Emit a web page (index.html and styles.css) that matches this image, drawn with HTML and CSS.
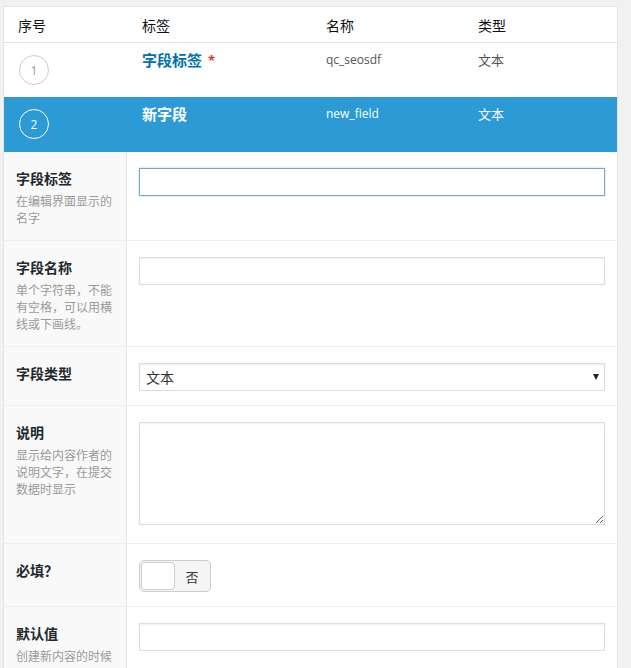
FILE: index.html
```html
<!DOCTYPE html>
<html lang="zh-CN">
<head>
<meta charset="utf-8">
<title>字段</title>
<link rel="stylesheet" href="styles.css">
</head>
<body>
<div class="panel">
  <div class="list-head">
    <div class="cell c-idx">序号</div>
    <div class="cell">标签</div>
    <div class="cell">名称</div>
    <div class="cell">类型</div>
  </div>
  <div class="list-row">
    <div class="cell c-idx"><span class="num">1</span></div>
    <div class="cell c-label"><a class="link" href="#">字段标签</a><span class="req">*</span></div>
    <div class="cell c-name">qc_seosdf</div>
    <div class="cell c-type">文本</div>
  </div>
  <div class="list-row active">
    <div class="cell c-idx"><span class="num">2</span></div>
    <div class="cell c-label"><span class="link">新字段</span></div>
    <div class="cell c-name">new_field</div>
    <div class="cell c-type">文本</div>
  </div>

  <div class="form">
    <div class="frow">
      <div class="flabel"><div class="ltitle">字段标签</div><div class="ldesc">在编辑界面显示的名字</div></div>
      <div class="finput"><input class="text focus" type="text"></div>
    </div>
    <div class="frow">
      <div class="flabel"><div class="ltitle">字段名称</div><div class="ldesc">单个字符串，不能有空格，可以用横线或下画线。</div></div>
      <div class="finput"><input class="text" type="text"></div>
    </div>
    <div class="frow">
      <div class="flabel"><div class="ltitle">字段类型</div></div>
      <div class="finput"><div class="select-wrap"><select class="select"><option>文本</option></select></div></div>
    </div>
    <div class="frow">
      <div class="flabel"><div class="ltitle">说明</div><div class="ldesc">显示给内容作者的说明文字，在提交数据时显示</div></div>
      <div class="finput"><textarea class="textarea"></textarea></div>
    </div>
    <div class="frow">
      <div class="flabel"><div class="ltitle">必填？</div></div>
      <div class="finput"><div class="toggle"><span class="knob"></span><span class="tlabel">否</span></div></div>
    </div>
    <div class="frow">
      <div class="flabel"><div class="ltitle">默认值</div><div class="ldesc">创建新内容的时候显示</div></div>
      <div class="finput"><input class="text" type="text"></div>
    </div>
  </div>
</div>
</body>
</html>
```
FILE: styles.css
```css
* { box-sizing: border-box; }
html, body { margin: 0; padding: 0; }
body {
  background: #f1f1f1;
  font-family: "Open Sans", "Noto Sans CJK SC", sans-serif;
  color: #444;
  font-size: 13px;
}
.panel {
  margin: 6px 0 0 3px;
  width: 615px;
  background: #fff;
  border: 1px solid #e5e5e5;
  border-bottom: 0;
}
.list-head, .list-row {
  display: grid;
  grid-template-columns: 138px 184px 152px 1fr;
}
.list-head {
  height: 36px;
  border-bottom: 1px solid #e1e1e1;
  align-items: center;
  font-size: 14px;
  color: #111;
  font-family: "Noto Sans CJK SC", sans-serif;
}
.list-head .c-idx { padding-left: 14px; }
.list-row {
  height: 54px;
}
.list-row.active {
  background: #2b9ad5;
  height: 55px;
  color: #fff;
}
.list-row .c-idx { padding: 12px 0 0 15px; }
.list-row .c-label, .list-row .c-name, .list-row .c-type { padding-top: 7px; line-height: 20px; }
.num {
  display: flex;
  width: 30px;
  height: 30px;
  border: 1px solid #ccc;
  border-radius: 50%;
  align-items: center;
  justify-content: center;
  font-size: 12px;
  color: #999;
}
.active .num { border-color: #fff; color: #fff; }
.link {
  font-size: 15px;
  font-weight: bold;
  color: #0073aa;
  text-decoration: none;
  font-family: "Noto Sans CJK SC", sans-serif;
}
.active .link { color: #fff; }
.req { color: #dc3232; font-weight: bold; margin-left: 6px; font-size: 13px; vertical-align: top; }
.c-name { font-size: 12px; color: #555; }
.c-type { font-size: 13px; color: #555; font-family: "Noto Sans CJK SC", sans-serif; }
.active .c-name, .active .c-type { color: #fff; }

.frow {
  display: grid;
  grid-template-columns: 123px 1fr;
  border-bottom: 1px solid #eee;
}
.flabel {
  background: #f9f9f9;
  border-right: 1px solid #e5e5e5;
  padding: 16px 12px 14px 12px;
  font-family: "Noto Sans CJK SC", sans-serif;
}
.ltitle {
  font-size: 14px;
  font-weight: bold;
  line-height: 20px;
  color: #23282d;
}
.ldesc {
  margin-top: 4px;
  font-size: 12px;
  line-height: 17px;
  color: #999;
}
.finput {
  padding: 16px 12px 14px 12px;
}
.text {
  display: block;
  width: 100%;
  height: 28px;
  border: 1px solid #ddd;
  box-shadow: inset 0 1px 2px rgba(0,0,0,0.07);
  background: #fff;
  margin: 0;
  outline: none;
}
.text.focus { border-color: #7fa3bf; box-shadow: 0 0 2px rgba(30,140,190,0.4); }
.select-wrap { position: relative; }
.select-wrap::after {
  content: "";
  position: absolute;
  right: 6px;
  top: 11px;
  border-left: 3.5px solid transparent;
  border-right: 3.5px solid transparent;
  border-top: 6px solid #222;
}
.select {
  appearance: none;
  -webkit-appearance: none;
  display: block;
  width: 100%;
  height: 28px;
  margin: 0;
  padding: 0 6px;
  border: 1px solid #ddd;
  box-shadow: inset 0 1px 2px rgba(0,0,0,0.07);
  background: #fff;
  font-family: "Noto Sans CJK SC", sans-serif;
  font-size: 14px;
  color: #333;
  border-radius: 0;
}
.textarea {
  display: block;
  width: 100%;
  height: 103px;
  margin: 0 0 4px 0;
  border: 1px solid #ddd;
  box-shadow: inset 0 1px 2px rgba(0,0,0,0.07);
  resize: vertical;
}
.toggle {
  display: flex;
  align-items: center;
  width: 72px;
  height: 32px;
  border: 1px solid #ccc;
  border-radius: 5px;
  background: #f5f5f5;
  padding: 1px;
  font-family: "Noto Sans CJK SC", sans-serif;
}
.knob {
  width: 34px;
  height: 28px;
  background: #fff;
  border: 1px solid #ccc;
  border-radius: 4px;
}
.tlabel {
  flex: 1;
  text-align: center;
  font-size: 13px;
  color: #333;
}
```
